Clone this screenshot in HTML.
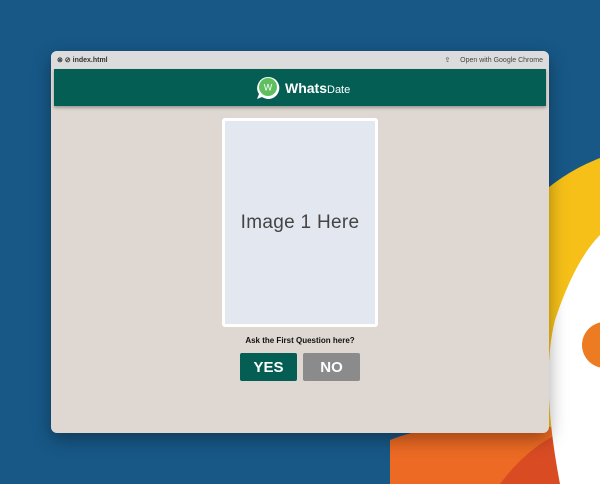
<!DOCTYPE html>
<html><head><style>
html,body{margin:0;width:600px;height:484px;overflow:hidden}
body{background:#175887;position:relative;font-family:"Liberation Sans",sans-serif}
.bg{position:absolute;left:0;top:0;display:block}
.win{position:absolute;left:51px;top:51px;width:498px;height:382px;background:#dfd8d2;border-radius:6px;box-shadow:0 6px 18px rgba(0,0,0,.35);overflow:hidden}
.tb{height:18px;background:#dcdcdc;font-size:7px;color:#333;position:relative}
.tb .l{position:absolute;left:6px;top:5px;font-weight:bold}
.tb .r{position:absolute;right:6px;top:5px;color:#444}
.hd{position:absolute;left:3px;top:18px;width:492px;height:37px;background:#055e54;box-shadow:0 2px 3px rgba(0,0,0,.3)}
.card{position:absolute;left:171px;top:67px;width:150px;height:203px;background:#e3e7ef;border:3px solid #fff;border-radius:3px;display:flex;align-items:center;justify-content:center;font-size:19px;color:#444;font-weight:300;letter-spacing:0.3px}
.q{position:absolute;left:0;width:498px;top:285px;text-align:center;font-size:8px;font-weight:bold;color:#111}
.btn{position:absolute;top:302px;width:57px;height:28px;border-radius:2px;color:#fff;font-weight:bold;font-size:15px;text-align:center;line-height:30px}
</style></head><body>
<svg class="bg" width="600" height="484">
<circle cx="670" cy="340" r="195" fill="#f6c018"/>
<path d="M390 440 Q440 420 520 425 L600 430 L600 484 L390 484Z" fill="#ec6a23"/>
<path d="M500 484 Q540 430 600 420 L600 484Z" fill="#d94c23"/>
<path d="M560 484 Q540 380 555 320 Q575 260 600 235 L600 484Z" fill="#fff"/>
<circle cx="605" cy="345" r="23" fill="#ec7b22"/>
</svg>
<div class="win">
<div class="tb"><span class="l">⊗ ⊘ index.html</span><span class="r">⇪ &nbsp;&nbsp;&nbsp;&nbsp;Open with Google Chrome</span></div>
<div class="hd">
<svg style="position:absolute;left:201px;top:6px" width="26" height="26" viewBox="0 0 26 26"><path d="M13 2a11 11 0 1 1-6 20l-5 2 2-5A11 11 0 0 1 13 2z" fill="#fff"/><circle cx="13" cy="12" r="9" fill="#5fbf5f"/><text x="13" y="15.5" font-size="9" fill="#fff" text-anchor="middle" font-family="Liberation Sans">W</text></svg>
<div style="position:absolute;left:231px;top:11px;color:#fff;font-size:14px"><b>Whats</b><span style="font-size:11px">Date</span></div>
</div>
<div class="card">Image 1 Here</div>
<div class="q">Ask the First Question here?</div>
<div class="btn" style="left:189px;background:#055e54">YES</div>
<div class="btn" style="left:252px;background:#8b8b8b">NO</div>
</div>
</body></html>
